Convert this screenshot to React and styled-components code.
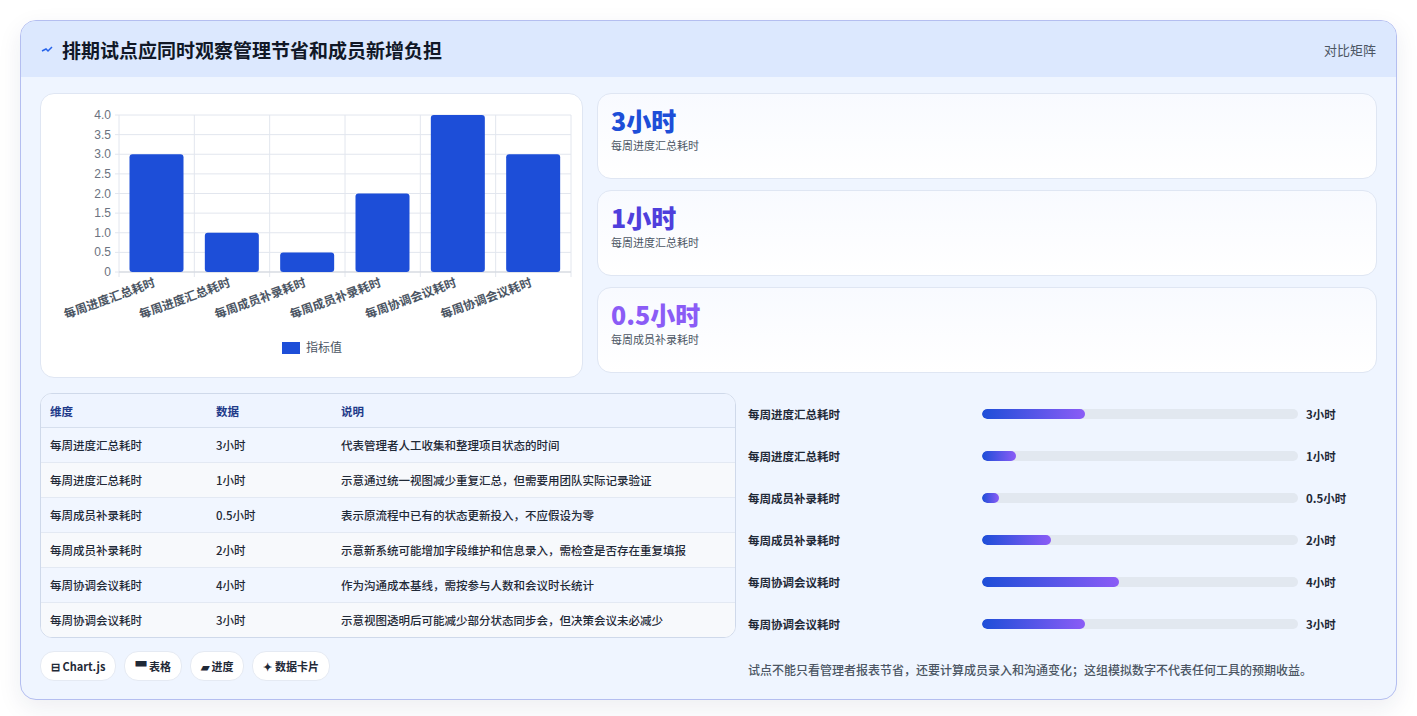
import React from 'react';
import styled, { createGlobalStyle } from 'styled-components';

const Global = createGlobalStyle`
  body { margin: 0; background: #fff; font-family: "Noto Sans CJK SC", "Noto Sans", sans-serif; }
`;

const rows = [
  { name: '每周进度汇总耗时', value: 3, note: '代表管理者人工收集和整理项目状态的时间' },
  { name: '每周进度汇总耗时', value: 1, note: '示意通过统一视图减少重复汇总，但需要用团队实际记录验证' },
  { name: '每周成员补录耗时', value: 0.5, note: '表示原流程中已有的状态更新投入，不应假设为零' },
  { name: '每周成员补录耗时', value: 2, note: '示意新系统可能增加字段维护和信息录入，需检查是否存在重复填报' },
  { name: '每周协调会议耗时', value: 4, note: '作为沟通成本基线，需按参与人数和会议时长统计' },
  { name: '每周协调会议耗时', value: 3, note: '示意视图透明后可能减少部分状态同步会，但决策会议未必减少' },
];

const Page = styled.div`
  padding: 20px 20px 20px 20px;
`;
const Card = styled.div`
  border: 1px solid #b4bef0;
  border-radius: 16px;
  background: #eff5ff;
  overflow: hidden;
  box-shadow: 0 8px 24px rgba(30, 40, 90, 0.08);
`;
const Header = styled.div`
  height: 56px;
  background: #dce8fe;
  display: flex;
  align-items: center;
  justify-content: space-between;
  padding: 0 20px;
`;
const Title = styled.h1`
  margin: 0;
  font-size: 19px;
  font-weight: 700;
  color: #111827;
  display: flex;
  align-items: center;
  gap: 9px;
`;
const Tag = styled.span`
  font-size: 13px;
  color: #4b5563;
`;
const Body = styled.div`
  padding: 16px 19px 18px 19px;
  display: flex;
  flex-direction: column;
  gap: 15px;
`;
const TopRow = styled.div`
  display: grid;
  grid-template-columns: 543px 1fr;
  gap: 14px;
`;
const Panel = styled.div`
  background: #fff;
  border: 1px solid #dfe6f3;
  border-radius: 14px;
`;
const ChartPanel = styled(Panel)`
  height: 283px;
`;
const Stats = styled.div`
  display: flex;
  flex-direction: column;
  gap: 11px;
`;
const Stat = styled(Panel)`
  height: 86px;
  padding: 10px 13px;
  box-sizing: border-box;
  background: linear-gradient(180deg, #f8faff, #ffffff);
`;
const StatValue = styled.div`
  font-size: 25px;
  font-weight: 800;
  color: ${p => p.$color};
  line-height: 33px;
`;
const StatLabel = styled.div`
  font-size: 11px;
  color: #4b5563;
`;
const BottomRow = styled.div`
  display: grid;
  grid-template-columns: 696px 1fr;
  gap: 12px;
`;
const Left = styled.div`
  display: flex;
  flex-direction: column;
  gap: 13px;
`;
const Table = styled.table`
  width: 100%;
  border-collapse: separate;
  border-spacing: 0;
  border: 1px solid #cfd9ea;
  border-radius: 12px;
  overflow: hidden;
  font-size: 11.5px;
  color: #1f2937;
  background: #fff;
`;
const Th = styled.th`
  text-align: left;
  font-weight: 600;
  color: #1e3a8a;
  background: #eef4ff;
  height: 33px;
  padding: 0 9px;
  border-bottom: 1px solid #d6dfee;
`;
const Td = styled.td`
  height: 34px;
  padding: 0 9px;
  font-weight: 500;
  background: ${p => (p.$odd ? '#f7f9fc' : '#f1f6ff')};
  border-bottom: ${p => (p.$last ? 'none' : '1px solid #e3e9f3')};
`;
const Chips = styled.div`
  display: flex;
  gap: 8px;
`;
const Chip = styled.span`
  height: 28px;
  padding: 0 10px;
  border-radius: 14px;
  background: #fff;
  border: 1px solid #e5eaf3;
  font-size: 11px;
  font-weight: 600;
  color: #1f2937;
  display: flex;
  align-items: center;
  gap: 3px;
`;
const Bars = styled.div`
  display: flex;
  flex-direction: column;
`;
const BarRow = styled.div`
  display: grid;
  grid-template-columns: 234px 324px 1fr;
  align-items: center;
  height: 42px;
  font-size: 11.5px;
  font-weight: 600;
  color: #1f2937;
`;
const Track = styled.div`
  height: 10px;
  border-radius: 5px;
  background: #e2e8f0;
  margin-right: 8px;
  overflow: hidden;
`;
const Fill = styled.div`
  height: 100%;
  border-radius: 5px;
  background: linear-gradient(90deg, #1d4ed8, #8b5cf6);
`;
const Note = styled.p`
  margin: 16px 0 0;
  font-size: 12px;
  color: #4b5563;
  font-weight: 500;
`;

function Chart() {
  const x0 = 78, x1 = 530, yTop = 21, yBot = 178;
  const col = (x1 - x0) / 6;
  const y = v => yBot - (v / 4) * (yBot - yTop);
  const ticks = [0, 0.5, 1, 1.5, 2, 2.5, 3, 3.5, 4];
  return (
    <svg width="543" height="283" style={{ display: 'block' }}>
      {ticks.map(t => (
        <g key={t}>
          <line x1={x0 - 4} x2={x1} y1={y(t)} y2={y(t)} stroke="#e2e6ee" />
          <text x={x0 - 8} y={y(t) + 4} fontSize="12" fill="#6b7280" textAnchor="end" fontFamily="Liberation Sans, sans-serif">
            {t === 0 ? '0' : t.toFixed(1)}
          </text>
        </g>
      ))}
      {[0, 1, 2, 3, 4, 5, 6].map(i => (
        <line key={i} x1={x0 + i * col} x2={x0 + i * col} y1={yTop} y2={yBot + 5} stroke="#e2e6ee" />
      ))}
      <line x1={x0} x2={x1} y1={yBot} y2={yBot} stroke="#d1d5db" />
      {rows.map((r, i) => (
        <g key={i}>
          <rect x={x0 + i * col + 10.5} y={y(r.value)} width={54} height={yBot - y(r.value)} rx="3" fill="#1d4ed8" />
          <text
            transform={`translate(${x0 + i * col + 37}, ${yBot + 14}) rotate(-20)`}
            fontSize="12"
            fill="#4b5563"
            textAnchor="end"
            fontWeight="600"
          >
            {r.name}
          </text>
        </g>
      ))}
      <rect x="241" y="248" width="18" height="12" fill="#1d4ed8" />
      <text x="265" y="258" fontSize="12" fill="#4b5563">指标值</text>
    </svg>
  );
}

const statColors = ['#1d4ed8', '#4f3fdc', '#8b5cf6'];

export default function App() {
  return (
    <Page>
      <Global />
      <Card>
        <Header>
          <Title>
            <svg width="12" height="10" viewBox="0 0 12 10">
              <path d="M1 7 L5 5 L7 7 L11 3" stroke="#2563eb" strokeWidth="1.5" fill="none" />
            </svg>
            排期试点应同时观察管理节省和成员新增负担
          </Title>
          <Tag>对比矩阵</Tag>
        </Header>
        <Body>
          <TopRow>
            <ChartPanel><Chart /></ChartPanel>
            <Stats>
              {rows.slice(0, 3).map((r, i) => (
                <Stat key={i}>
                  <StatValue $color={statColors[i]}>{r.value}小时</StatValue>
                  <StatLabel>{r.name}</StatLabel>
                </Stat>
              ))}
            </Stats>
          </TopRow>
          <BottomRow>
            <Left>
              <Table>
                <thead>
                  <tr><Th style={{ width: 148 }}>维度</Th><Th style={{ width: 107 }}>数据</Th><Th>说明</Th></tr>
                </thead>
                <tbody>
                  {rows.map((r, i) => (
                    <tr key={i}>
                      <Td $odd={i % 2 === 1} $last={i === 5}>{r.name}</Td>
                      <Td $odd={i % 2 === 1} $last={i === 5}>{r.value}小时</Td>
                      <Td $odd={i % 2 === 1} $last={i === 5}>{r.note}</Td>
                    </tr>
                  ))}
                </tbody>
              </Table>
              <Chips>
                <Chip>⊟ Chart.js</Chip>
                <Chip>▀ 表格</Chip>
                <Chip>▰ 进度</Chip>
                <Chip>✦ 数据卡片</Chip>
              </Chips>
            </Left>
            <Bars>
              {rows.map((r, i) => (
                <BarRow key={i}>
                  <span>{r.name}</span>
                  <Track><Fill style={{ width: `${(r.value / 9.2) * 100}%` }} /></Track>
                  <span>{r.value}小时</span>
                </BarRow>
              ))}
              <Note>试点不能只看管理者报表节省，还要计算成员录入和沟通变化；这组模拟数字不代表任何工具的预期收益。</Note>
            </Bars>
          </BottomRow>
        </Body>
      </Card>
    </Page>
  );
}
